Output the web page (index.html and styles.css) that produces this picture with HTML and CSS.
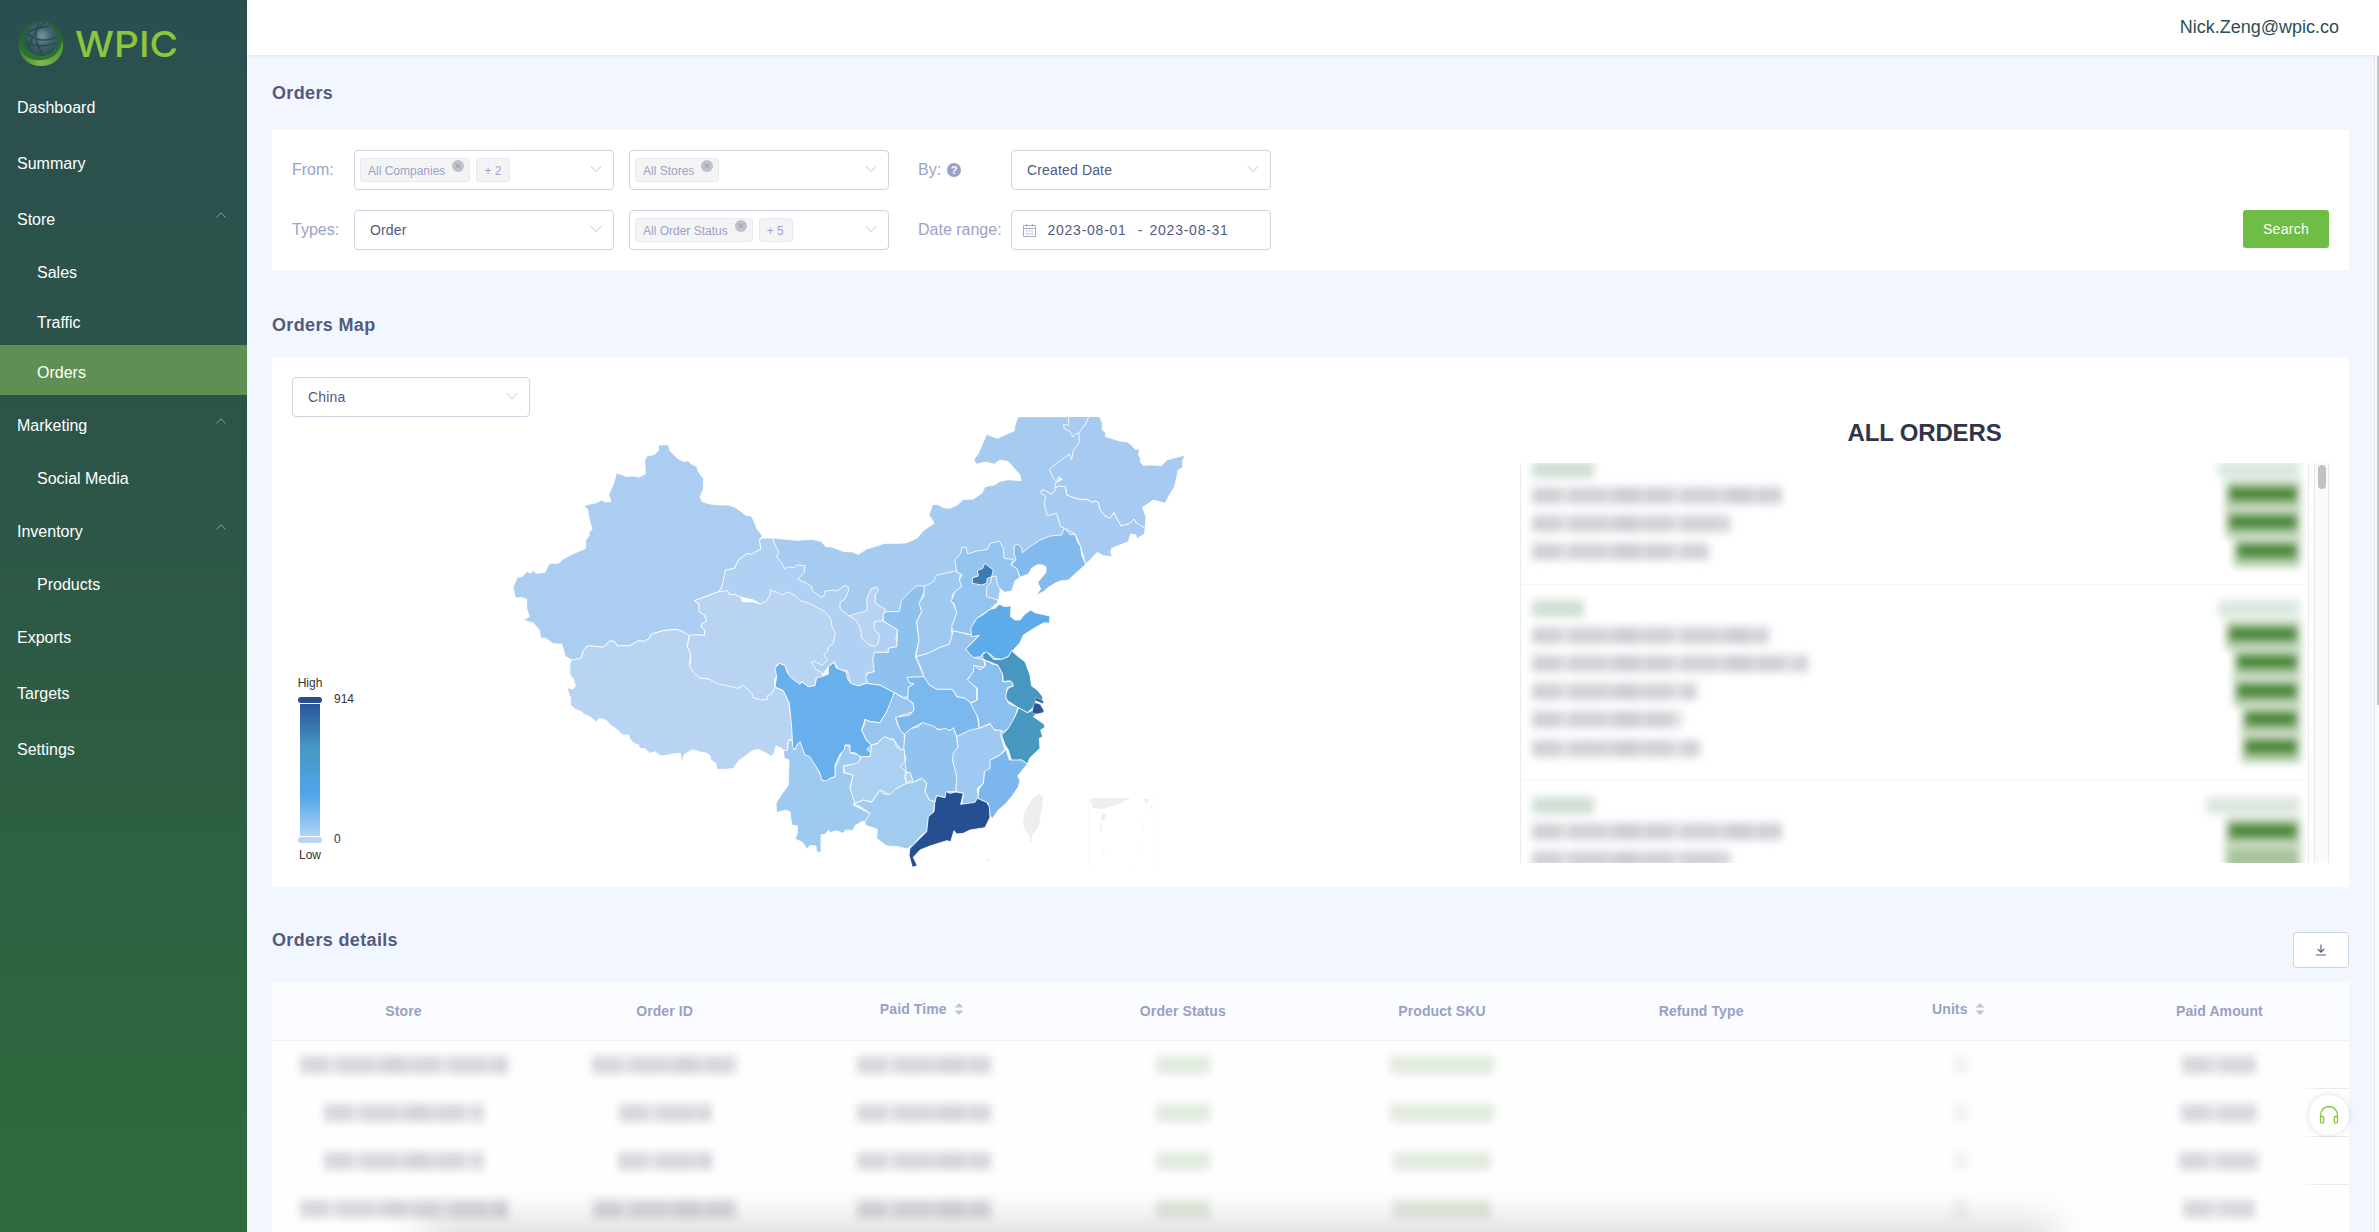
FILE: index.html
```html
<!DOCTYPE html>
<html lang="en">
<head>
<meta charset="utf-8">
<title>Orders</title>
<link rel="stylesheet" href="styles.css">
</head>
<body>
<svg width="0" height="0" class="defs" aria-hidden="true">
  <symbol id="down" viewBox="0 0 12 8"><path d="M.7 1 6 6.7 11.3 1" fill="none" stroke="currentColor" stroke-width="1"/></symbol>
  <symbol id="up" viewBox="0 0 12 8"><path d="M1.5 6.5 6 1.8 10.5 6.5" fill="none" stroke="currentColor" stroke-width="1"/></symbol>
  <symbol id="close" viewBox="0 0 12 12"><circle cx="6" cy="6" r="6" fill="#bcc1cb"/><path d="M3.7 3.7 8.3 8.3M8.3 3.7 3.7 8.3" stroke="#8f97b0" stroke-width=".9"/></symbol>
  <symbol id="sort" viewBox="0 0 10 14"><path d="M5 1 9.5 5.6H.5ZM5 13 .5 8.4h9Z" fill="#c0c4cc"/></symbol>
</svg>
<div class="app">
  <aside class="sidebar">
    <div class="brand">
      <svg width="170" height="50" viewBox="0 0 170 50">
        <defs>
          <linearGradient id="ring" x1="0" y1="0" x2="0" y2="1"><stop offset=".35" stop-color="#286432"/><stop offset="1" stop-color="#2f7a30"/></linearGradient>
          <linearGradient id="shine" x1="0" y1="0" x2="1" y2="0"><stop offset="0" stop-color="#3d8135"/><stop offset=".5" stop-color="#83b94a"/><stop offset="1" stop-color="#4f9a3a"/></linearGradient>
          <radialGradient id="globe" cx=".53" cy=".42" r=".55"><stop offset="0" stop-color="#7b9296"/><stop offset=".5" stop-color="#416570"/><stop offset="1" stop-color="#2c5150"/></radialGradient>
        </defs>
        <circle cx="25" cy="25.500" r="22.500" fill="url(#ring)"/>
        <path d="M3 30C9 41 18 43 27 42 37 41 45 34 46 22 50 36 40 48 25 48 13 48 5 41 3 30Z" fill="url(#shine)"/>
        <circle cx="25" cy="21" r="17" fill="url(#globe)"/>
        <path d="M11 15Q23 27 41 19M10 24Q24 31 40 25M23 5Q15 19 27 37M29 4Q18 12 13 29M33 8Q21 10 11 14" fill="none" stroke="#24484b" stroke-width="1.300"/>
        <text x="59" y="39" class="wordmark" textLength="103" lengthAdjust="spacingAndGlyphs">WPIC</text>
      </svg>
    </div>
    <nav class="menu">
      <a class="item">Dashboard</a>
      <a class="item">Summary</a>
      <a class="item">Store<svg class="caret"><use href="#up"/></svg></a>
      <a class="item sub">Sales</a>
      <a class="item sub">Traffic</a>
      <a class="item sub active">Orders</a>
      <a class="item">Marketing<svg class="caret"><use href="#up"/></svg></a>
      <a class="item sub">Social Media</a>
      <a class="item">Inventory<svg class="caret"><use href="#up"/></svg></a>
      <a class="item sub">Products</a>
      <a class="item">Exports</a>
      <a class="item">Targets</a>
      <a class="item">Settings</a>
    </nav>
  </aside>
  <div class="page">
    <header class="topbar">Nick.Zeng@wpic.co</header>
    <main class="content">
      <h2 class="title">Orders</h2>
      <section class="card filters">
        <div class="fields">
          <label>From:</label>
          <div class="select tags"><span class="tag">All Companies<svg class="x"><use href="#close"/></svg></span><span class="tag">+ 2</span><svg class="arrow"><use href="#down"/></svg></div>
          <div class="select tags"><span class="tag">All Stores<svg class="x"><use href="#close"/></svg></span><svg class="arrow"><use href="#down"/></svg></div>
          <label class="second">By: <span class="help">?</span></label>
          <div class="select">Created Date<svg class="arrow"><use href="#down"/></svg></div>
          <label>Types:</label>
          <div class="select">Order<svg class="arrow"><use href="#down"/></svg></div>
          <div class="select tags"><span class="tag">All Order Status<svg class="x"><use href="#close"/></svg></span><span class="tag">+ 5</span><svg class="arrow"><use href="#down"/></svg></div>
          <label class="second">Date range:</label>
          <div class="select dates">
            <svg width="13" height="13" viewBox="0 0 13 13"><path d="M.5 1.500h12v11H.5ZM.5 4.500h12M3.500 0v2.500M9.500 0v2.500" fill="none" stroke="#a3acc8"/><path d="M3 7h7M3 9.800h7" stroke="#a3acc8" stroke-width="1.200" stroke-dasharray="1.600 1.100"/></svg>
            <span>2023-08-01</span><i>-</i><span>2023-08-31</span>
          </div>
        </div>
        <button class="search">Search</button>
      </section>

      <h2 class="title">Orders Map</h2>
      <section class="card mapcard">
        <div class="select country">China<svg class="arrow"><use href="#down"/></svg></div>
        <div class="split">
          <div class="legend">
            <span class="cap">High</span>
            <div class="scale"><b class="knob top"></b><b class="ramp"></b><b class="knob low"></b><div class="ends"><span>914</span><span>0</span></div></div>
            <span class="cap">Low</span>
          </div>
          <svg class="map" viewBox="0 51 2100 1350">
            <!-- centre: Inner Mongolia and Gansu lie under their neighbours -->
            <g transform="translate(660 0)">
              <path fill="#9fc9f0" stroke="none" d="M230 900 530 700 700 530 730 490 830 490 820 600 760 700 880 830 850 1030 760 1190 600 1220 480 1250 400 1210 300 1160 225 1040Z"/>
              <path fill="#a5cbf0" d="M157 414 232 421 275 418 303 424 318 440 335 441 372 455 395 455 415 463 440 447 495 430 540 430 560 428 590 415 612 390 643 370 627 345 638 313 655 314 670 323 690 325 712 315 730 298 760 297 785 280 795 260 823 255 838 245 863 239 903 242 900 225 865 185 840 180 822 193 808 188 790 187 770 193 761 180 775 160 800 103 832 115 882 93 885 75 894 50 1108 50 1080 100 1080 128 1055 175 1010 250 1020 300 1060 400 1000 470 900 520 700 560 600 660 388 660 300 620 180 520Z"/>
              <path fill="#b0d1f3" d="M127 414 157 414 168 440 177 460 170 470 185 488 195 508 203 500 222 503 230 495 255 497 253 517 233 538 255 547 275 560 277 573 305 592 315 583 312 574 340 570 350 573 375 556 385 562 385 575 375 597 360 607 360 627 388 648 466 650 488 662 533 690 528 715 533 740 505 745 505 757 463 757 463 815 440 820 443 848 415 858 392 852 382 812 355 808 342 785 325 800 300 835 265 850 280 700 100 600-4 575 5 560 15 510 43 505 55 480 82 460 95 460 122 447 118 420Z"/>
              <path fill="#b8d4f2" d="M388 648 412 640 436 634 442 625 440 600 447 580 455 565 470 562 475 570 466 585 466 610 497 628 488 662 463 665 463 690 478 703 475 730 462 740 445 733 425 715 420 680 405 658Z"/>
            </g>
            <!-- west -->
            <g>
              <path fill="#aacdf1" d="M39 562 52 532 66 530 80 515 92 519 103 510 107 520 135 517 148 490 175 490 190 477 215 463 240 452 257 445 257 420 268 407 267 398 276 388 267 355 263 328 250 318 270 312 290 308 305 300 315 306 333 305 326 285 341 250 350 218 378 229 405 228 415 232 436 222 434 180 442 167 458 165 468 160 476 150 476 135 505 134 510 152 530 173 548 184 563 183 575 192 590 200 598 220 611 236 610 268 600 290 607 305 630 312 660 315 685 315 705 322 720 332 737 346 754 348 762 363 770 385 787 408 778 420 782 447 765 456 755 463 742 460 715 480 703 505 676 510 670 540 665 560 656 575 583 602 597 612 597 635 613 645 620 663 604 673 604 682 614 690 614 706 590 704 570 710 545 693 528 688 490 692 455 702 445 718 430 724 415 722 390 737 352 738 345 726 330 722 310 742 280 738 262 738 250 752 243 775 215 780 195 768 186 733 160 731 135 714 123 715 118 690 100 669 86 665 70 660 88 650 80 625 80 598 63 592 46 594Z"/>
              <path fill="#b8d4f2" d="M215 780 243 775 250 752 262 738 280 738 310 742 330 722 345 726 352 738 390 737 415 722 430 724 445 718 455 702 490 692 528 688 545 693 568 706 562 740 572 760 568 798 600 834 824 862 850 872 868 912 868 930 874 950 878 1020 865 1020 862 1052 850 1050 845 1045 828 1038 820 1065 812 1068 800 1060 775 1048 757 1052 728 1074 718 1080 700 1105 680 1108 650 1108 648 1090 632 1080 632 1070 622 1060 600 1056 590 1052 575 1050 552 1065 545 1090 541 1060 520 1062 495 1067 480 1067 465 1055 450 1060 435 1047 420 1045 415 1034 405 1032 390 1018 386 1005 367 1005 347 985 335 978 317 960 297 955 290 967 270 950 250 942 245 935 225 928 212 915 212 895 200 862 218 868 226 858 222 840 209 822 210 790Z"/>
              <path fill="#b8d4f2" d="M656 575 683 572 687 583 705 584 722 592 727 605 760 606 780 612 797 605 810 585 810 570 830 576 845 585 865 576 885 586 900 602 912 605 935 613 950 622 975 635 992 656 996 680 1006 700 1000 730 985 742 983 755 971 765 983 780 967 796 940 782 935 790 950 810 964 816 970 832 948 835 946 856 928 862 905 845 900 853 870 835 855 797 835 790 826 802 831 825 824 840 824 862 815 882 802 887 802 898 785 900 757 893 757 880 730 857 712 865 695 860 655 852 625 836 600 834 582 820 568 798 572 785 572 760 562 740 568 708 575 704 614 706 614 690 604 682 604 673 620 663 613 645 597 635 597 612 583 602Z"/>
            </g>
            <g transform="translate(660 0)">
              <path fill="#9ec9f0" d="M190 1053 203 1050 205 1020 218 1022 222 1050 237 1025 275 1070 310 1143 345 1130 345 1105 375 1035 390 1040 392 1060 420 1065 420 1090 372 1097 370 1118 400 1125 390 1160 405 1205 400 1215 450 1240 448 1262 425 1265 405 1277 398 1292 378 1290 368 1300 350 1292 330 1298 325 1290 318 1302 303 1305 303 1358 290 1355 288 1338 270 1336 262 1347 245 1325 225 1318 232 1300 232 1278 215 1275 210 1235 195 1230 170 1238 168 1210 180 1190 205 1155 207 1080 193 1075Z"/>
              <path fill="#67b0eb" d="M165 860 170 830 165 805 178 790 195 797 203 820 215 835 240 853 245 845 265 860 285 857 290 833 305 830 325 822 325 800 342 787 350 805 378 815 382 835 392 850 415 858 440 850 480 855 523 878 520 905 505 930 497 940 480 968 450 965 435 958 425 990 440 1022 455 1035 440 1048 452 1058 450 1070 425 1072 405 1058 390 1058 390 1035 375 1035 373 1050 360 1062 345 1095 345 1130 330 1135 320 1143 305 1140 300 1120 270 1070 255 1065 240 1025 230 1035 226 1050 218 1040 215 980 208 910 190 872Z"/>
              <path fill="#8ec1ee" d="M614 557 618 562 600 605 605 635 590 665 597 720 586 768 612 832 563 832 568 848 582 852 565 862 565 890 550 892 523 878 480 855 443 850 437 832 443 820 463 815 458 780 463 757 505 757 505 745 530 740 533 690 490 662 490 640 500 635 537 635 545 600 580 565 590 558Z"/>
              <path fill="#9fc9f0" d="M612 560 640 545 650 525 705 513 722 522 718 535 727 560 697 582 697 605 712 640 695 690 697 710 688 733 660 742 625 760 588 770 597 720 590 665 605 635 597 608 612 590Z"/>
              <path fill="#97c5ef" d="M588 770 625 760 660 742 688 733 700 692 752 705 778 705 737 748 760 772 792 780 795 802 765 797 760 817 742 838 770 865 770 902 752 908 735 895 710 890 697 868 650 868 628 855 612 832 605 808Z"/>
              <path fill="#97c5ef" d="M523 878 545 892 563 897 582 915 580 935 540 947 527 955 535 980 553 1000 553 1048 543 1050 520 1017 510 1018 495 1010 480 1028 455 1035 440 1020 425 990 435 970 435 958 450 965 480 968 500 935Z"/>
              <path fill="#7bb8ee" d="M560 832 612 830 628 855 650 868 697 868 710 890 735 895 752 908 768 930 778 985 745 1000 710 1010 700 985 690 992 655 987 607 968 575 985 555 1005 540 990 527 952 570 945 582 930 580 910 563 897 565 862 582 852 568 848Z"/>
              <path fill="#92c3ef" d="M555 1000 575 985 595 980 607 968 640 978 655 990 675 985 690 992 700 983 710 1012 715 1045 698 1080 712 1130 708 1175 683 1175 675 1193 650 1187 645 1205 628 1200 615 1175 620 1150 605 1135 580 1147 570 1120 560 1118 555 1090 558 1070 550 1060Z"/>
              <path fill="#acd0f1" d="M455 1035 475 1030 480 1020 495 1010 510 1018 520 1017 530 1040 545 1050 553 1048 555 1085 540 1100 558 1115 552 1130 560 1150 530 1165 510 1185 480 1170 455 1205 430 1200 405 1210 390 1165 400 1125 375 1118 370 1100 415 1088 425 1070 450 1070 452 1058Z"/>
              <path fill="#a1ccef" d="M400 1213 430 1200 455 1207 480 1170 490 1182 510 1183 525 1168 560 1150 580 1147 605 1135 620 1150 615 1175 628 1200 645 1205 640 1240 625 1290 600 1310 580 1335 560 1347 535 1340 500 1338 470 1315 472 1288 435 1275 435 1265 450 1240 420 1220Z"/>
              <path fill="#acd0f1" d="M560 1118 570 1117 578 1140 560 1148 557 1132Z"/>
            </g>
            <!-- east -->
            <g transform="translate(1320 0)">
              <path fill="#a6caf1" d="M386 48 386 75 370 74 373 86 390 94 398 110 410 100 420 102 438 70 450 48"/>
              <path fill="#a6caf1" d="M447 48 478 48 487 70 487 90 497 98 497 110 520 117 540 123 560 125 575 135 585 148 598 147 596 165 602 178 601 187 610 196 635 195 665 197 680 180 710 172 735 165 727 185 729 200 712 213 712 225 703 262 690 282 675 310 640 300 608 322 618 352 616 385 600 380 590 370 582 357 570 370 543 378 530 355 522 338 510 355 495 348 480 330 475 308 465 303 455 307 440 297 430 300 405 295 380 285 376 260 345 262 345 250 367 238 355 230 350 243 342 238 328 208 350 190 388 162 395 178 400 150 418 128 417 98 438 70Z"/>
              <path fill="#a6caf1" d="M352 258 376 260 380 285 405 295 430 300 440 297 455 307 465 303 475 308 480 330 495 348 510 355 522 338 530 355 543 378 570 370 582 357 590 370 616 385 613 402 590 417 588 405 572 402 565 425 540 435 515 445 512 457 517 470 490 467 472 457 437 493 422 440 405 402 375 385 362 380 350 340 322 347 312 310 318 290 303 280 303 272 312 270 335 283 345 270Z"/>
              <path fill="#82baed" d="M372 385 392 405 405 402 412 425 422 440 425 465 437 493 405 522 385 540 360 543 345 550 325 562 310 575 287 587 302 567 293 547 318 517 318 500 305 494 290 495 275 505 265 522 240 532 230 505 213 495 228 480 222 460 222 438 235 432 245 445 247 458 270 440 300 420 330 408 365 405Z"/>
              <path fill="#93c3ef" d="M45 480 62 460 65 443 78 442 82 462 110 453 143 448 150 430 178 423 190 445 192 475 220 478 213 495 230 505 240 532 225 543 215 573 195 577 180 566 170 600 175 605 150 628 110 655 92 690 100 705 38 692 35 680 50 640 42 610 33 605 45 575 65 560 58 540 67 525 50 515Z"/>
              <path fill="#a0c8f1" d="M155 530 168 528 172 552 181 570 176 600 140 590 140 560 152 548Z"/>
              <path fill="#3d7cb2" d="M97 533 115 528 112 512 128 505 134 490 160 510 155 530 142 535 140 550 125 555 97 550Z"/>
              <path fill="#5eabec" d="M92 685 110 655 128 645 150 628 165 625 178 613 195 620 213 617 212 650 225 660 240 660 255 642 272 630 285 638 330 648 328 670 312 668 290 680 250 705 240 728 218 752 205 770 185 778 165 775 150 762 130 758 122 770 100 773 77 748 90 735 118 706 95 710Z"/>
              <path fill="#4797c1" d="M127 765 140 755 160 778 185 778 205 770 215 752 235 770 255 785 270 825 275 858 292 870 308 890 308 905 288 903 280 922 262 938 232 922 200 900 195 885 205 865 220 857 210 842 190 845 188 825 173 795 130 778Z"/>
              <path fill="#8bbfef" d="M133 780 160 793 173 795 188 822 188 845 215 845 220 857 202 863 197 890 205 910 234 922 225 950 215 980 190 995 160 988 150 970 118 985 115 955 92 910 112 900 112 865 82 840 100 815 102 795 120 810 137 797Z"/>
              <path fill="#4797c1" d="M236 923 262 938 275 932 290 940 280 950 312 972 315 982 302 990 308 1010 298 1015 300 1045 270 1073 262 1092 245 1080 215 1083 205 1050 195 1035 185 1005 205 985 225 950Z"/>
              <path fill="#2a559a" stroke-width="1" d="M283 908 300 913 312 932 308 938 290 942 276 938ZM285 892 310 904 310 911 286 901Z"/>
              <path fill="#7bb7ed" d="M198 1048 208 1080 230 1080 245 1080 262 1092 233 1128 240 1140 235 1160 215 1190 195 1213 175 1230 158 1255 150 1248 145 1210 112 1195 118 1165 130 1150 133 1115 150 1080 185 1062Z"/>
              <path fill="#9fc9f2" d="M50 1010 90 990 118 985 150 972 165 992 183 990 183 1010 195 1048 180 1065 150 1080 150 1105 133 1115 130 1150 112 1165 115 1195 108 1210 65 1213 70 1180 48 1175 50 1130 38 1080 40 1060 54 1040Z"/>
              <path fill="#264f92" d="M-10 1187 15 1193 18 1175 30 1180 48 1176 70 1180 62 1213 105 1207 112 1195 140 1207 148 1220 150 1252 135 1283 90 1290 70 1300 50 1302 42 1292 32 1325 20 1322-30 1338-60 1350-80 1372-68 1397-83 1402-93 1365-90 1345-70 1325-40 1295-35 1250-18 1235-16 1210Z"/>
              <g fill="#eee" stroke="none">
                <path d="M298 1181 309 1190 306 1225 296 1280 275 1310 275 1326 270 1325 269 1308 255 1290 249 1272 253 1237 280 1193ZM448 1200 456 1194 573 1195 535 1213 490 1227 460 1224ZM487 1243 501 1241 492 1260 480 1262ZM610 1197 627 1197 620 1213ZM606 1253 609 1284 606 1297ZM597 1352 608 1337 602 1350ZM484 1357 496 1340 490 1355ZM483 1262 487 1300 480 1284ZM570 1400 579 1389 575 1398ZM625 1230 638 1214 633 1226ZM138 1378 146 1377 146 1385 139 1385Z"/>
                <path fill="#f6f6f6" d="M444 1195h2v205h-2ZM642 1195h2v205h-2Z"/>
              </g>
            </g>
          </svg>
          <div class="panel">
            <h3>ALL ORDERS</h3>
            <div class="scroller">
              <div class="list">
                <div class="group">
                  <div class="head"><s style="width:62px"></s><s style="width:82px"></s></div>
                  <div class="row"><s style="width:250px"></s><s style="width:74px"></s></div>
                  <div class="row"><s style="width:198px"></s><s style="width:74px"></s></div>
                  <div class="row"><s style="width:177px"></s><s style="width:66px"></s></div>
                </div>
                <div class="group">
                  <div class="head"><s style="width:52px"></s><s style="width:82px"></s></div>
                  <div class="row"><s style="width:237px"></s><s style="width:74px"></s></div>
                  <div class="row"><s style="width:276px"></s><s style="width:66px"></s></div>
                  <div class="row"><s style="width:165px"></s><s style="width:66px"></s></div>
                  <div class="row"><s style="width:150px"></s><s style="width:58px"></s></div>
                  <div class="row"><s style="width:168px"></s><s style="width:58px"></s></div>
                </div>
                <div class="group">
                  <div class="head"><s style="width:62px"></s><s style="width:94px"></s></div>
                  <div class="row"><s style="width:250px"></s><s style="width:74px"></s></div>
                  <div class="row last"><s style="width:198px"></s><s style="width:74px"></s></div>
                </div>
              </div>
              <div class="track"><b></b></div>
            </div>
          </div>
        </div>
      </section>

      <div class="detailhead">
        <h2 class="title">Orders details</h2>
        <button class="download"><svg width="12" height="12" viewBox="0 0 12 12"><path d="M6 .5v7.500M2.800 5 6 8.200 9.200 5M1 11h10" fill="none" stroke="#515a80" stroke-width="1.100"/></svg></button>
      </div>
      <section class="table">
        <div class="tr th"><span>Store</span><span>Order ID</span><span class="sortable">Paid Time<svg><use href="#sort"/></svg></span><span>Order Status</span><span>Product SKU</span><span>Refund Type</span><span class="sortable">Units<svg><use href="#sort"/></svg></span><span>Paid Amount</span></div>
        <div class="tr"><span><s style="width:208px"></s></span><span><s style="width:146px"></s></span><span><s style="width:134px"></s></span><span><s class="g" style="width:54px"></s></span><span><s class="g" style="width:104px"></s></span><span></span><span><s class="u"></s></span><span><s style="width:74px"></s></span></div>
        <div class="tr"><span><s style="width:160px"></s></span><span><s style="width:92px"></s></span><span><s style="width:134px"></s></span><span><s class="g" style="width:54px"></s></span><span><s class="g" style="width:104px"></s></span><span></span><span><s class="u"></s></span><span><s style="width:76px"></s></span></div>
        <div class="tr"><span><s style="width:160px"></s></span><span><s style="width:94px"></s></span><span><s style="width:134px"></s></span><span><s class="g" style="width:54px"></s></span><span><s class="g" style="width:98px"></s></span><span></span><span><s class="u"></s></span><span><s style="width:80px"></s></span></div>
        <div class="tr"><span><s style="width:208px"></s></span><span><s style="width:144px"></s></span><span><s style="width:134px"></s></span><span><s class="g" style="width:54px"></s></span><span><s class="g" style="width:98px"></s></span><span></span><span><s class="u"></s></span><span><s style="width:72px"></s></span></div>
      </section>
    </main>
  </div>
  <div class="pagescroll"><b></b></div>
  <div class="bottomshade"></div>
  <div class="support"><svg width="20" height="18" viewBox="0 0 20 18"><path d="M1.500 12V9a8.500 8.500 0 0 1 17 0v3M1.500 10.500h2.200a1 1 0 0 1 1 1v4a1.500 1.500 0 0 1-3.200 0ZM18.500 10.500h-2.200a1 1 0 0 0-1 1v4a1.500 1.500 0 0 0 3.200 0Z" fill="none" stroke="#86c63f" stroke-width="1.300"/></svg></div>
</div>
</body>
</html>
```
FILE: styles.css
```css
* { box-sizing: border-box; }
body { margin: 0; font-family: "Liberation Sans", Arial, sans-serif; color: #515a80; background: #f2f7ff; }
.defs { position: absolute; }
.app { position: relative; display: flex; width: 2379px; height: 1232px; overflow: hidden; }

.sidebar { width: 247px; flex: none; background: linear-gradient(#2b4f50, #2c5448 35%, #2f6b3c); }
.brand { height: 77px; padding: 18px 0 0 16px; }
.wordmark { font: 500 36px Inter, sans-serif; fill: #8cc63f; }
.item { display: flex; align-items: center; justify-content: space-between; height: 56px; padding: 6px 20px 0 17px; color: #fff; font-size: 16px; }
.item.sub { height: 50px; padding-left: 37px; }
.item.active { background: #608f54; }
.caret { width: 12px; height: 8px; color: #8a9c9a; margin-top: -11px; }

.page { flex: 1; min-width: 0; }
.topbar { height: 55px; padding: 0 40px 0; display: flex; align-items: center; justify-content: flex-end; background: #fff; font-size: 18px; color: #2b4f50; box-shadow: 0 1px 4px rgba(0, 21, 41, .08); position: relative; }
.content { padding: 0 30px 0 25px; }
.title { margin: 0; font-size: 18px; line-height: 76px; height: 75px; color: #515a80; letter-spacing: .35px; }
.card { background: #fff; }

.filters { height: 140px; margin-bottom: 17px; padding: 20px; display: flex; justify-content: space-between; align-items: flex-end; }
.filters + .title { height: 70px; line-height: 77px; }
.fields { display: grid; grid-template-columns: 62px 260px 15px 260px 29px 93px 260px; grid-auto-rows: 40px; row-gap: 20px; align-items: center; }
.fields > :nth-child(5n+3) { grid-column: 4; }
.fields > :nth-child(5n+4) { grid-column: 6; }
label { font-size: 16px; color: #9aa3c7; display: flex; align-items: center; }
.help { width: 14px; height: 14px; margin-left: 6px; border-radius: 50%; background: #97a1c5; color: #fff; font: bold 11px/14px "Liberation Sans", sans-serif; text-align: center; }
.select { display: flex; align-items: center; height: 40px; padding: 0 11px 0 15px; border: 1px solid #cdd4e2; border-radius: 4px; background: #fff; color: #515a80; font-size: 14px; letter-spacing: .15px; }
.arrow { width: 12px; height: 8px; margin-left: auto; margin-top: -3px; color: #c0c4cc; }
.tags { padding: 0 11px 0 5px; letter-spacing: 0; }
.tag { display: flex; align-items: center; height: 24px; padding: 1px 8px 0 7px; margin-right: 6px; border: 1px solid #e8e9ed; border-radius: 3px; background: #f4f4f5; color: #9aa3c7; font-size: 12px; white-space: pre; }
.tag:has(.x) { padding-right: 5px; }
.x { width: 12px; height: 12px; margin: -10px 0 0 7px; }
.dates { padding-left: 11px; letter-spacing: .75px; }
.dates span { margin-left: 11.500px; }
.dates i { margin: 0 -5px 0 11px; font-style: normal; }
.search { width: 86px; height: 38px; margin-bottom: 2px; border: 0; border-radius: 3px; background: #6ebd45; color: #fff; font: 14px "Liberation Sans", sans-serif; letter-spacing: .3px; }

.mapcard { height: 530px; padding: 20px; }
.country { width: 238px; }
.split { display: flex; height: 450px; }
.legend { width: 208px; padding-top: 259px; font-size: 12px; color: #333; }
.cap { display: block; width: 36px; line-height: 15px; text-align: center; }
.scale { position: relative; width: 24px; height: 146px; margin: 6px 0 5px 6px; display: flex; flex-direction: column; align-items: center; justify-content: space-between; }
.knob { width: 24px; height: 6px; border-radius: 3px; background: #264f92; }
.knob.low { background: #b8d4f2; }
.ramp { width: 20px; height: 132px; background: linear-gradient(#2a5598, #4797c1 33%, #50a6ec 69%, #b3d2f2); }
.ends { position: absolute; left: 36px; top: -5px; height: 154px; display: flex; flex-direction: column; justify-content: space-between; line-height: 14px; }
.map { width: 700px; height: 450px; stroke: #fff; stroke-width: 2.6; stroke-linejoin: round; }
.panel { width: 809px; margin-left: 320px; }
.panel h3 { margin: 0; height: 46px; font-size: 24px; line-height: 31px; text-align: center; color: #303549; letter-spacing: -.15px; }
.scroller { display: flex; height: 400px; }
.list { width: 789px; margin-right: 5px; border: solid #e9ebf0; border-width: 0 1px; overflow: hidden; }
.group { padding: 12px 8px 18px 11px; border-bottom: 1px solid #f6f7f9; }
.group:first-child { margin-top: -18px; }
.head, .row { display: flex; align-items: center; justify-content: space-between; height: 24px; }
.row { height: 28.3px; }
s { display: inline-block; height: 17px; background: repeating-linear-gradient(90deg, #cfd1d6 0 26px, #e6e7ea 33px, #d0d2d7 40px 72px, #dadce0 78px, #cbcdd3 86px 104px, #e2e3e7 112px); filter: blur(4.500px); text-decoration: none; }
.head s { background: #cfdfd3; }
.head s + s { background: #dbe7de; }
.row s + s { position: relative; height: 28px; background: #a9c59f; }
.row s + s::after { content: ""; position: absolute; inset: 8px 4px 10px; background: #3c7c2a; }
.row.last s + s::after { display: none; }
.track { width: 15px; border: solid #e8e8e8; border-width: 0 1px; background: #fafafa; padding: 2px 3px; }
.track b { display: block; width: 8px; height: 24px; border-radius: 4px; background: #c1c1c1; }

.detailhead { display: flex; justify-content: space-between; height: 95px; }
.detailhead .title { line-height: 106px; }
.download { display: flex; align-items: center; justify-content: center; width: 56px; height: 36px; margin-top: 45px; padding: 0; border: 1px solid #cdd4e2; border-radius: 3px; background: #fff; }
.table { background: #fefefe; }
.tr { display: grid; grid-template-columns: 263px repeat(7, 1fr); align-items: center; height: 48px; text-align: center; background: linear-gradient(90deg, transparent 97.7%, #e6eaf3 98.5%) bottom / 100% 1px no-repeat; }
.tr.th { height: 59px; background: #fafcff; border-bottom: 1px solid #edf1f7; color: #97a1c5; font-size: 14px; font-weight: bold; letter-spacing: .1px; }
.tr s { height: 18px; opacity: .85; vertical-align: middle; }
.tr s.g { background: #dbe7d8; }
.tr s.u { width: 15px; background: #f0f0f1; }
.sortable { display: flex; align-items: center; justify-content: center; margin-top: -4px; padding-right: 4px; }
.sortable svg { width: 10px; height: 14px; margin-left: 7px; }

.pagescroll { position: absolute; right: 0; top: 56px; bottom: 0; width: 5px; border-left: 1px solid #e3e7ee; background: #f7f9fc; }
.pagescroll b { position: absolute; right: 0; top: 0; width: 2px; height: 649px; background: #c3c5c9; }
.bottomshade { position: absolute; left: 430px; right: 330px; bottom: -20px; height: 20px; box-shadow: 0 0 40px 6px rgba(0, 0, 0, .19); }
.support { position: absolute; left: 2309px; top: 1095px; width: 40px; height: 40px; border-radius: 50%; background: #fff; box-shadow: 0 0 6px rgba(0, 0, 0, .14); display: flex; align-items: center; justify-content: center; }
```
